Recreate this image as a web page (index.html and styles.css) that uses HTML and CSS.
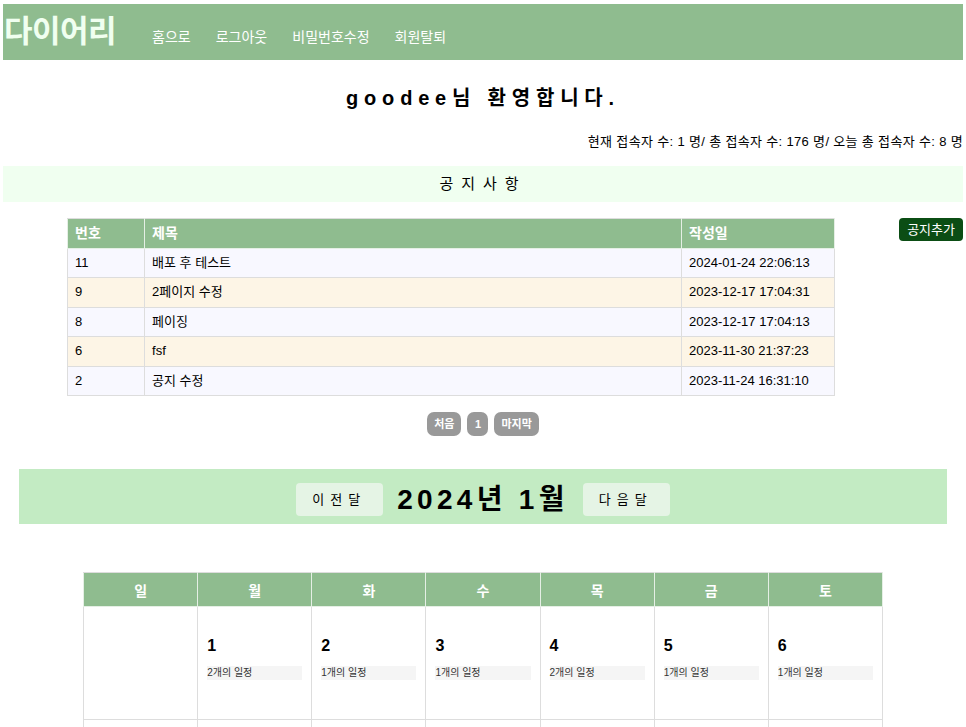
FILE: index.html
```html
<!DOCTYPE html>
<html lang="ko">
<head>
<meta charset="utf-8">
<title>다이어리</title>
<link rel="stylesheet" href="styles.css">
</head>
<body>
<header class="topbar">
  <div class="logo">다이어리</div>
  <nav class="nav">
    <a href="#">홈으로</a>
    <a href="#">로그아웃</a>
    <a href="#">비밀번호수정</a>
    <a href="#">회원탈퇴</a>
  </nav>
</header>

<h2 class="welcome">goodee님 환영합니다.</h2>
<div class="visitors">현재 접속자 수: 1 명/ 총 접속자 수: 176 명/ 오늘 총 접속자 수: 8 명</div>

<div class="notice-bar">공지사항</div>

<section class="notice-area">
  <div class="notice-main">
    <table class="notice-table">
      <thead>
        <tr><th class="c-no">번호</th><th class="c-title">제목</th><th class="c-date">작성일</th></tr>
      </thead>
      <tbody>
        <tr class="odd"><td>11</td><td>배포 후 테스트</td><td>2024-01-24 22:06:13</td></tr>
        <tr class="even"><td>9</td><td>2페이지 수정</td><td>2023-12-17 17:04:31</td></tr>
        <tr class="odd"><td>8</td><td>페이징</td><td>2023-12-17 17:04:13</td></tr>
        <tr class="even"><td>6</td><td>fsf</td><td>2023-11-30 21:37:23</td></tr>
        <tr class="odd"><td>2</td><td>공지 수정</td><td>2023-11-24 16:31:10</td></tr>
      </tbody>
    </table>
  </div>
  <a href="#" class="add-btn">공지추가</a>
</section>

<div class="pager">
  <a href="#" class="pg">처음</a>
  <a href="#" class="pg pg-num">1</a>
  <a href="#" class="pg">마지막</a>
</div>

<div class="cal-head">
  <a href="#" class="cal-btn">이전달</a>
  <span class="cal-title">2024년 1월</span>
  <a href="#" class="cal-btn">다음달</a>
</div>

<table class="cal">
  <thead>
    <tr><th>일</th><th>월</th><th>화</th><th>수</th><th>목</th><th>금</th><th>토</th></tr>
  </thead>
  <tbody>
    <tr>
      <td></td>
      <td><div class="day">1</div><div class="ev">2개의 일정</div></td>
      <td><div class="day">2</div><div class="ev">1개의 일정</div></td>
      <td><div class="day">3</div><div class="ev">1개의 일정</div></td>
      <td><div class="day">4</div><div class="ev">2개의 일정</div></td>
      <td><div class="day">5</div><div class="ev">1개의 일정</div></td>
      <td><div class="day">6</div><div class="ev">1개의 일정</div></td>
    </tr>
    <tr>
      <td><div class="day">7</div></td>
      <td><div class="day">8</div></td>
      <td><div class="day">9</div></td>
      <td><div class="day">10</div></td>
      <td><div class="day">11</div></td>
      <td><div class="day">12</div></td>
      <td><div class="day">13</div></td>
    </tr>
    <tr>
      <td><div class="day">14</div></td>
      <td><div class="day">15</div></td>
      <td><div class="day">16</div></td>
      <td><div class="day">17</div></td>
      <td><div class="day">18</div></td>
      <td><div class="day">19</div></td>
      <td><div class="day">20</div></td>
    </tr>
  </tbody>
</table>
</body>
</html>
```

FILE: styles.css
```css
* { box-sizing: border-box; }

body {
  margin: 4px 3px 0;
  font-family: "Liberation Sans", "Noto Sans CJK KR", sans-serif;
  color: #000;
  background: #fff;
}

a { text-decoration: none; }

.topbar {
  display: flex;
  align-items: baseline;
  height: 56px;
  background: #8fbc8f;
  padding-left: 1px;
}

.logo {
  font-size: 31px;
  font-weight: bold;
  line-height: 56px;
  color: #f0fff0;
  letter-spacing: -0.5px;
}

.nav {
  display: flex;
  gap: 25px;
  margin-left: 36px;
}

.nav a {
  color: #fff;
  font-size: 14px;
}

.welcome {
  margin: 26px 0 0;
  text-align: center;
  font-size: 20px;
  line-height: 24px;
  font-weight: bold;
  letter-spacing: 5.8px;
}

.visitors {
  margin-top: 24px;
  text-align: right;
  font-size: 13px;
  line-height: 16px;
  letter-spacing: 0.34px;
}

.notice-bar {
  margin-top: 16px;
  height: 36px;
  line-height: 36px;
  background: #f0fff0;
  text-align: center;
  font-size: 15px;
  letter-spacing: 8px;
}

.notice-area {
  display: flex;
  align-items: flex-start;
  margin-top: 16px;
}

.notice-main {
  flex: 1;
  display: flex;
  justify-content: center;
}

.notice-table {
  width: 768px;
  border-collapse: collapse;
  font-size: 13px;
}

.notice-table th,
.notice-table td {
  border: 1px solid #ddd;
  text-align: left;
  padding: 6px 7px;
  line-height: 16.4px;
}

.notice-table th {
  background: #8fbc8f;
  color: #fff;
  font-size: 14px;
  line-height: 16px;
  padding: 6px 7px 7px;
  border-color: #e5efe5;
  border-top-color: #ddd;
}

.c-no { width: 77px; }
.c-date { width: 153px; }

.odd td { background: #f8f8ff; }
.even td { background: #fdf5e6; }

.add-btn {
  display: block;
  background: #0b4d14;
  color: #fff;
  font-size: 13px;
  line-height: 23px;
  height: 23px;
  padding: 0 8px;
  border-radius: 4px;
}

.pager {
  display: flex;
  justify-content: center;
  gap: 6px;
  margin-top: 16px;
}

.pg {
  display: block;
  background: #999;
  color: #fff;
  font-size: 11px;
  font-weight: bold;
  height: 24px;
  line-height: 24px;
  padding: 0 7px;
  border-radius: 7px;
  text-align: center;
}

.pg-num { min-width: 21px; padding: 0; }

.cal-head {
  margin: 33px 16px 0;
  height: 55px;
  background: #c3ebc3;
  display: flex;
  justify-content: center;
  align-items: center;
}

.cal-btn {
  display: block;
  width: 87px;
  height: 33px;
  margin-top: 6px;
  line-height: 33px;
  padding-left: 16px;
  background: #e5f4e5;
  border-radius: 4px;
  color: #000;
  font-size: 13px;
  letter-spacing: 6px;
}

.cal-title {
  margin: 0 14px;
  font-size: 28px;
  font-weight: bold;
  letter-spacing: 4.3px;
}

.cal {
  width: 800px;
  margin: 48px auto 0;
  border-collapse: collapse;
  table-layout: fixed;
}

.cal th,
.cal td {
  border: 1px solid #ddd;
}

.cal th {
  background: #8fbc8f;
  color: #fff;
  font-size: 14px;
  font-weight: bold;
  height: 34px;
  border-color: #e5efe5;
  border-top-color: #ddd;
}

.cal td {
  height: 113px;
  vertical-align: top;
  padding: 29px 9px 0;
}

.day {
  font-size: 16px;
  font-weight: bold;
  line-height: 20px;
}

.ev {
  margin-top: 10px;
  height: 14px;
  line-height: 14px;
  background: #f5f5f5;
  font-size: 10px;
  color: #333;
}
```
